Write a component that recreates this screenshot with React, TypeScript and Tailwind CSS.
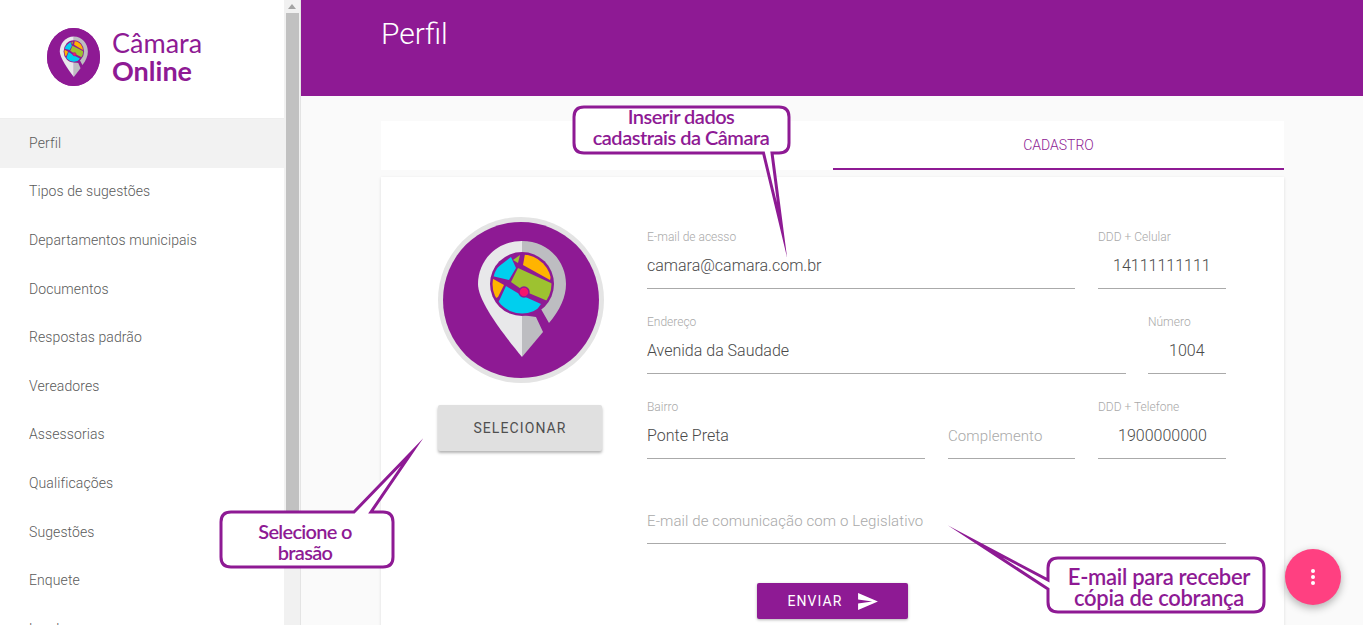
const menuItems = [
  "Perfil",
  "Tipos de sugestões",
  "Departamentos municipais",
  "Documentos",
  "Respostas padrão",
  "Vereadores",
  "Assessorias",
  "Qualificações",
  "Sugestões",
  "Enquete",
  "Leads",
];

// pin + map glass, drawn in a 166 box
const PinLogo = ({ width, height, ring }: { width: number; height: number; ring?: boolean }) => (
  <svg width={width} height={height} viewBox="0 0 166 166" preserveAspectRatio="none" className="shrink-0">
    <clipPath id="glass">
      <circle cx="84" cy="67" r="29.5" />
    </clipPath>
    <circle cx="83" cy="83" r="83" fill={ring ? "#e4e4e4" : "#8e1a94"} />
    <circle cx="83" cy="83" r={ring ? 78 : 83} fill="#8e1a94" />
    <path d="M84 24C58 24 40 44 40 67C40 85 66 118 84 140Z" fill="#e8e8ea" />
    <path d="M84 24C110 24 128 44 128 67C128 80 122 93 111 106L103 92L84 90Z" fill="#bdbdc1" />
    <path d="M84 98L98 100L105 115L84 140Z" fill="#bdbdc1" />
    <circle cx="84" cy="67" r="32" fill="#8e1a94" />
    <g clipPath="url(#glass)">
      <path d="M87 37L120 36L112 63L85 48Z" fill="#ffb400" />
      <path d="M75 43L82 38L80 46Z" fill="#9dc230" />
      <path d="M50 58L73 40L78 51L71 63Z" fill="#00cfee" />
      <path d="M50 59L66 68L60 80L50 85Z" fill="#ffb400" />
      <path d="M80 51L115 67L112 85L86 74L73 65Z" fill="#9dc230" />
      <path d="M68 69L83 78L103 87L90 105L55 95L62 82Z" fill="#00cfee" />
    </g>
    <circle cx="86" cy="75" r="5" fill="#f5156d" stroke="#8e1a94" strokeWidth="1.5" />
  </svg>
);

const Callout = ({ className, path, lines, textClass }: { className: string; path: string; lines: string[]; textClass: string }) => (
  <div className={`absolute ${className}`}>
    <svg className="absolute inset-0 h-full w-full overflow-visible">
      <path d={path} fill="#fff" stroke="#8e1a94" strokeWidth="3" strokeLinejoin="miter" strokeMiterlimit="40" />
    </svg>
    <div className={`absolute text-center font-[Lato,sans-serif] text-[#8e1a94] font-semibold leading-[21px] ${textClass}`}>
      {lines.map((l) => (
        <div key={l}>{l}</div>
      ))}
    </div>
  </div>
);

const Field = ({ label, value, width, right, muted }: { label?: string; value: string; width: string; right?: string; muted?: boolean }) => (
  <div className={`${width} h-[62px] flex flex-col border-b border-[#aaaaaa]`}>
    <div className="h-[20px] text-[12px] leading-[20px] text-[#a9a9a9]">{label}</div>
    <div className={`mt-[7px] leading-[24px] ${muted ? "text-[15px] tracking-[0.1px] text-[#a9a9a9]" : "text-[16px] text-[#4a4a4a]"} ${right ?? ""}`}>{value}</div>
  </div>
);

export default function App() {
  return (
    <div className="relative flex h-[625px] w-[1363px] overflow-hidden bg-[#fafafa] font-[Roboto,sans-serif] font-light">
      {/* sidebar */}
      <aside className="flex w-[284px] shrink-0 flex-col bg-white">
        <div className="flex h-[119px] shrink-0 items-start border-b border-[#eeeeee] pl-[47px] pt-[28px]">
          <PinLogo width={53} height={58} />
          <div className="ml-[12px] font-[Lato,sans-serif] text-[#8e1a94]">
            <div className="text-[27px] leading-[30px] font-normal">Câmara</div>
            <div className="-mt-[1px] text-[27px] leading-[27px] font-bold">Online</div>
          </div>
        </div>
        {menuItems.map((item, i) => (
          <div
            key={item}
            className={`flex h-[48.6px] shrink-0 items-center pl-[29px] text-[14px] tracking-[0.1px] text-[#5a5a5a] ${i === 0 ? "bg-[#f2f2f2]" : ""}`}
          >
            {item}
          </div>
        ))}
      </aside>

      {/* scrollbar */}
      <div className="flex w-[17px] shrink-0 flex-col items-center border-r border-[#e4e4e4] bg-[#f1f1f1]">
        <div className="mt-[4px] h-0 w-0 border-x-[4px] border-b-[5px] border-x-transparent border-b-[#a3a3a3]" />
        <div className="mt-[4px] h-[525px] w-[13px] bg-[#c1c1c1]" />
      </div>

      {/* main */}
      <main className="flex min-w-0 flex-1 flex-col">
        <header className="h-[96px] shrink-0 bg-[#8e1a94] pl-[80px] pt-[15px] text-[30px] leading-[38px] text-white">Perfil</header>

        <div className="ml-[80px] mt-[25px] w-[903px]">
          <div className="flex h-[49px] bg-white">
            <div className="flex-1" />
            <div className="flex w-[451px] items-center justify-center border-b-2 border-[#8e1a94] pt-[2px] text-[14px] text-[#8e1a94]">CADASTRO</div>
          </div>

          <section className="mt-[7px] flex h-[460px] bg-white pl-[57px] pt-[40px] shadow-[0_1px_3px_rgba(0,0,0,0.12)]">
            <div className="w-[166px] shrink-0">
              <PinLogo width={166} height={166} ring />
              <button className="mt-[22px] h-[46px] w-[164px] rounded-[2px] bg-[#e0e0e0] text-[14px] font-normal tracking-[1.1px] text-[#4f4f4f] shadow-[0_2px_3px_rgba(0,0,0,0.3)]">
                SELECIONAR
              </button>
            </div>

            <div className="ml-[43px] mt-[10px] w-[579px]">
              <div className="flex gap-[23px]">
                <Field label="E-mail de acesso" value="camara@camara.com.br" width="w-[428px]" />
                <Field label="DDD + Celular" value="14111111111" width="w-[128px]" right="pl-[15px]" />
              </div>
              <div className="mt-[23px] flex gap-[22px]">
                <Field label="Endereço" value="Avenida da Saudade" width="w-[479px]" />
                <Field label="Número" value="1004" width="w-[78px]" right="pl-[21px]" />
              </div>
              <div className="mt-[23px] flex gap-[23px]">
                <Field label="Bairro" value="Ponte Preta" width="w-[278px]" />
                <Field value="Complemento" width="w-[127px]" muted />
                <Field label="DDD + Telefone" value="1900000000" width="w-[128px]" right="pl-[20px]" />
              </div>
              <div className="mt-[23px]">
                <Field value="E-mail de comunicação com o Legislativo" width="w-[579px]" muted />
              </div>
              <button className="ml-[110px] mt-[39px] flex h-[36px] w-[151px] items-center justify-center gap-[15px] rounded-[2px] bg-[#8e1a94] text-[14px] font-normal tracking-[1.1px] text-white shadow-[0_1px_3px_rgba(0,0,0,0.3)]">
                ENVIAR
                <svg width="20" height="17" viewBox="0 0 21 18" fill="#fff">
                  <path d="M0 18L21 9L0 0V7L15 9L0 11Z" />
                </svg>
              </button>
            </div>
          </section>
        </div>
      </main>

      {/* annotations */}
      <Callout
        className="left-[574px] top-[107px] h-[46px] w-[215px]"
        path="M10 0H205Q215 0 215 10V36Q215 46 205 46H198L208 123L189.5 46H10Q0 46 0 36V10Q0 0 10 0Z"
        lines={["Inserir dados", "cadastrais da Câmara"]}
        textClass="left-[-1px] right-0 top-[-1px] text-[20px] tracking-[-0.5px]"
      />
      <Callout
        className="left-[220.5px] top-[511.5px] h-[55px] w-[172px]"
        path="M10 0H133L191 -60L150 0H162Q172 0 172 10V45Q172 55 162 55H10Q0 55 0 45V10Q0 0 10 0Z"
        lines={["Selecione o", "brasão"]}
        textClass="left-[-3px] right-0 top-[9px] text-[20px] tracking-[-0.7px]"
      />
      <Callout
        className="left-[1048px] top-[558px] h-[54px] w-[216px]"
        path="M10 0H206Q216 0 216 10V44Q216 54 206 54H10Q0 54 0 44V31L-72 -16L0 22V10Q0 0 10 0Z"
        lines={["E-mail para receber", "cópia de cobrança"]}
        textClass="left-[6px] right-0 top-[8px] text-[22px] tracking-[-0.3px]"
      />

      {/* fab */}
      <div className="absolute left-[1285px] top-[549px] flex h-[56px] w-[56px] flex-col items-center justify-center gap-[2px] rounded-full bg-[#ff4081] shadow-[0_3px_8px_rgba(0,0,0,0.3)]">
        <span className="h-[4px] w-[4px] rounded-full bg-white" />
        <span className="h-[4px] w-[4px] rounded-full bg-white" />
        <span className="h-[4px] w-[4px] rounded-full bg-white" />
      </div>
    </div>
  );
}
